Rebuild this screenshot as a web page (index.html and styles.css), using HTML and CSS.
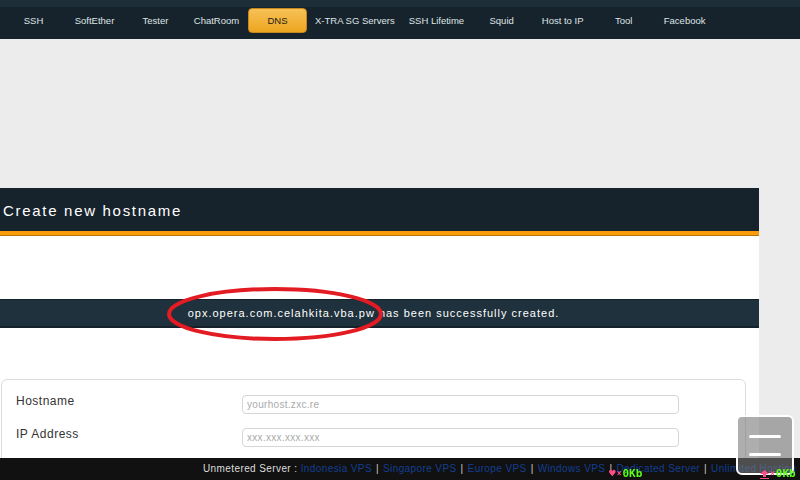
FILE: index.html
```html
<!DOCTYPE html>
<html>
<head>
<meta charset="utf-8">
<link rel="stylesheet" href="styles.css">
</head>
<body>
<nav class="nav">
  <a class="nav-item">SSH</a>
  <a class="nav-item">SoftEther</a>
  <a class="nav-item">Tester</a>
  <a class="nav-item">ChatRoom</a>
  <a class="nav-item active">DNS</a>
  <a class="nav-item">X-TRA SG Servers</a>
  <a class="nav-item">SSH Lifetime</a>
  <a class="nav-item">Squid</a>
  <a class="nav-item">Host to IP</a>
  <a class="nav-item">Tool</a>
  <a class="nav-item">Facebook</a>
</nav>
<div class="banner"></div>
<main class="main">
  <h1 class="title">Create new hostname</h1>
  <div class="gap-top"></div>
  <div class="message">
    <span class="msg-text">opx.opera.com.celahkita.vba.pw has been successfully created.</span>
    <svg class="circle" width="224" height="60" viewBox="0 0 224 60"><ellipse cx="112" cy="30" rx="106" ry="25" fill="none" stroke="#e31b23" stroke-width="4"/></svg>
  </div>
  <div class="gap-mid"></div>
  <form class="form">
    <label class="label">Hostname</label>
    <input class="field" placeholder="yourhost.zxc.re">
    <label class="label">IP Address</label>
    <input class="field" placeholder="xxx.xxx.xxx.xxx">
  </form>
</main>
<footer class="footer"><span class="ft-label">Unmetered Server : </span><a class="ft-link">Indonesia VPS</a><span class="sep">|</span><a class="ft-link">Singapore VPS</a><span class="sep">|</span><a class="ft-link">Europe VPS</a><span class="sep">|</span><a class="ft-link">Windows VPS</a><span class="sep">|</span><a class="ft-link">Dedicated Server</a><span class="sep">|</span><a class="ft-link">Unlimited Hosting</a></footer>
<div class="menu-btn"><span class="bar"></span><span class="bar"></span></div>
<div class="meter meter-down"><span class="heart">&#9829;</span><span class="x">&#215;</span><span class="kb">0Kb</span></div>
<div class="meter meter-up"><svg class="up" width="9" height="9" viewBox="0 0 9 9"><path d="M4.5 0 L9 4 H6 V7 H3 V4 H0 Z M0 8 H9 V9 H0 Z" fill="#ff4f8b"/></svg><span class="x">&#215;</span><span class="kb">0Kb</span></div>
</body>
</html>
```
FILE: styles.css
```css
* { box-sizing: border-box; }
html, body { margin: 0; padding: 0; }
body {
  background: #ececec;
  font-family: "Liberation Sans", Arial, sans-serif;
  width: 800px;
  height: 480px;
  overflow: hidden;
}
.nav {
  display: flex;
  align-items: flex-start;
  height: 39px;
  background: #17232c;
  border-top: 7px solid #1e2e39;
  padding-left: 3px;
}
.nav-item {
  min-width: 59px;
  height: 25px;
  margin: 1px 1px 0;
  padding: 0 5px;
  display: flex;
  align-items: center;
  justify-content: center;
  color: #dfe3e6;
  font-size: 9.5px;
  white-space: nowrap;
  border-radius: 4px;
  border: 1px solid transparent;
}
.nav-item.active {
  background: linear-gradient(#f7c157, #eda51f);
  border-color: #c9861a;
  color: #1a1a1a;
}
.banner { height: 149px; }
.main {
  width: 759px;
  background: #fff;
  height: 300px;
}
.title {
  margin: 0;
  height: 47px;
  background: #17232c;
  border-bottom: 4px solid #f99b0a;
  box-shadow: 0 1px 0 #b8740a;
  color: #fff;
  font-weight: normal;
  font-size: 15px;
  letter-spacing: 1.7px;
  padding: 14px 0 0 3px;
  line-height: 17px;
}
.gap-top { height: 64px; }
.message {
  position: relative;
  height: 29px;
  background: #1f313c;
  border-top: 1px solid #15222b;
  border-bottom: 2px solid #15222b;
  text-align: center;
  color: #fff;
  font-size: 11px;
  letter-spacing: 1px;
  line-height: 26px;
}
.msg-text { position: relative; left: -6px; }
.circle {
  position: absolute;
  left: 163px;
  top: -16px;
}
.gap-mid { height: 51px; }
.form {
  margin: 0 13px 0 1px;
  border: 1px solid #dcdcdc;
  border-radius: 6px;
  padding: 15px 0 20px 14px;
  display: grid;
  grid-template-columns: 226px 437px;
  row-gap: 14px;
  align-items: center;
}
.label {
  font-size: 12px;
  letter-spacing: 0.5px;
  color: #333;
  position: relative;
  top: -4px;
}
.field {
  height: 19px;
  border: 1px solid #d6d6d6;
  border-radius: 4px;
  padding: 0 4px;
  font-family: "Liberation Sans", Arial, sans-serif;
  font-size: 10px;
  letter-spacing: 0.3px;
  outline: none;
}
.field::placeholder { color: #aaa; }
.footer {
  position: fixed;
  left: 0;
  bottom: 0;
  width: 800px;
  height: 22px;
  background: #111;
  padding-left: 203px;
  font-size: 10px;
  letter-spacing: 0.4px;
  line-height: 21px;
  white-space: pre;
  overflow: hidden;
}
.ft-label { color: #ddd; }
.ft-link { color: #123f93; }
.sep { color: #ccc; margin: 0 4px; }
.menu-btn {
  position: fixed;
  left: 736px;
  top: 415px;
  width: 58px;
  height: 60px;
  border: 2px solid #fff;
  border-radius: 6px;
  background: rgba(120,120,120,0.6);
  display: flex;
  flex-direction: column;
  align-items: center;
  justify-content: center;
  gap: 15px;
  padding-top: 1px;
}
.bar {
  width: 32px;
  height: 3px;
  border-radius: 2px;
  background: #fff;
}
.meter {
  position: fixed;
  bottom: 0;
  display: flex;
  align-items: center;
  font-family: "DejaVu Sans Mono", monospace;
  font-weight: bold;
  font-size: 11px;
  line-height: 12px;
  height: 12px;
}
.meter-down { left: 609px; }
.meter-up { left: 760px; }
.heart { color: #ff4f8b; font-size: 11px; }
.x { color: #ff4f8b; font-size: 8px; margin: 0 1px; }
.kb { color: #5cff1a; }
```
